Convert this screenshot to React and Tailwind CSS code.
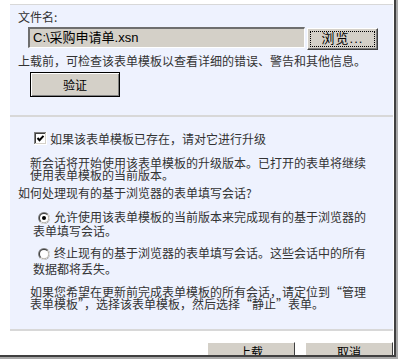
const font = "font-['Noto_Sans_CJK_SC','Liberation_Sans',sans-serif]";

function CheckBox() {
  return (
    <svg width="13" height="13" viewBox="0 0 13 13" className="shrink-0">
      <rect x="0" y="0" width="13" height="13" fill="#ffffff" />
      <rect x="0" y="0" width="12" height="1" fill="#808080" />
      <rect x="0" y="0" width="1" height="12" fill="#808080" />
      <rect x="1" y="1" width="10" height="1" fill="#404040" />
      <rect x="1" y="1" width="1" height="10" fill="#404040" />
      <rect x="1" y="11" width="11" height="1" fill="#d4d0c8" />
      <rect x="11" y="1" width="1" height="11" fill="#d4d0c8" />
      <path d="M3.5 6 L5.5 8.2 L9.5 3.8" fill="none" stroke="#000" strokeWidth="2" />
    </svg>
  );
}

function Radio({ on }) {
  return (
    <svg width="12" height="12" viewBox="0 0 12 12" className="shrink-0">
      <circle cx="6" cy="6" r="6" fill="#808080" />
      <path d="M10.24 1.76 A6 6 0 0 1 1.76 10.24 Z" fill="#ffffff" />
      <circle cx="6" cy="6" r="5" fill="#404040" />
      <path d="M9.54 2.46 A5 5 0 0 1 2.46 9.54 Z" fill="#d4d0c8" />
      <circle cx="6" cy="6" r="4" fill="#ffffff" />
      {on && <circle cx="6" cy="6" r="2" fill="#000000" />}
    </svg>
  );
}

export default function App() {
  return (
    <div className={`w-[401px] h-[359px] bg-white overflow-hidden text-[12px] leading-[12px] text-[#333333] ${font}`}>
      <div className="w-[398px] h-[359px] border-r-2 border-b-2 border-[#a8a8a8]">
        <div className="h-full border-r-2 border-b-2 border-[#404040] overflow-hidden flex flex-col">
          <div className="pl-[10px] pt-[4px] pr-[1px]">
            {/* upload section */}
            <div className="h-[111px] border-t border-[#d8d8d8] bg-[#eef2fe] px-[8px] pt-[6px]">
              <div className="whitespace-nowrap">文件名:</div>
              <div className="flex items-start mt-[4px] ml-[10px]">
                <div className="w-[277px] h-[21px] bg-[#d4d0c8] border-t-2 border-l-2 border-t-[#6e6e6e] border-l-[#6e6e6e] border-b border-r border-b-white border-r-white flex items-center pl-[3px] text-[13px] text-black font-['Liberation_Sans','Noto_Sans_CJK_SC',sans-serif] whitespace-nowrap">
                  C:\采购申请单.xsn
                </div>
                <button className="ml-[2px] mt-[1px] w-[71px] h-[22px] bg-[#d4d0c8] border border-t-white border-l-white border-r-[#404040] border-b-[#404040] shadow-[inset_-1px_-1px_0_#808080] p-[2px] flex">
                  <span className="flex-1 border border-dotted border-black flex items-center justify-center text-black text-[13px] font-['Liberation_Sans','Noto_Sans_CJK_SC',sans-serif] tracking-[1px]">
                    浏览...
                  </span>
                </button>
              </div>
              <div className="mt-[5px] whitespace-nowrap">
                上载前，可检查该表单模板以查看详细的错误、警告和其他信息。
              </div>
              <button className="mt-[5px] ml-[12px] w-[90px] h-[25px] bg-[#d4d0c8] border border-black shadow-[inset_1px_1px_0_#ffffff,inset_-1px_-1px_0_#808080] flex items-center justify-center text-black">
                验证
              </button>
            </div>
            <div className="h-[2px] bg-[#d8d8d8]" />

            {/* upgrade section */}
            <div className="h-[212px] bg-[#eef2fe] pl-[8px] pt-[15px]">
              <div className="flex items-start ml-[16px] whitespace-nowrap">
                <CheckBox />
                <span className="ml-[3px] mt-[1px]">如果该表单模板已存在，请对它进行升级</span>
              </div>
              <div className="mt-[12px] ml-[12px] whitespace-nowrap">
                新会话将开始使用该表单模板的升级版本。已打开的表单将继续
                <br />
                使用表单模板的当前版本。
              </div>
              <div className="mt-[6px] whitespace-nowrap">如何处理现有的基于浏览器的表单填写会话?</div>

              <div className="mt-[12px] ml-[15px] whitespace-nowrap">
                <div className="flex items-start">
                  <span className="mt-[1px] ml-[5px]">
                    <Radio on />
                  </span>
                  <span className="ml-[4px]">允许使用该表单模板的当前版本来完成现有的基于浏览器的</span>
                </div>
                <div className="mt-[1px]">表单填写会话。</div>
              </div>

              <div className="mt-[10px] ml-[15px] whitespace-nowrap">
                <div className="flex items-start">
                  <span className="mt-[1px] ml-[5px]">
                    <Radio />
                  </span>
                  <span className="ml-[4px]">终止现有的基于浏览器的表单填写会话。这些会话中的所有</span>
                </div>
                <div className="mt-[3px]">数据都将丢失。</div>
              </div>

              <div className="mt-[11px] ml-[12px] whitespace-nowrap">
                如果您希望在更新前完成表单模板的所有会话，请定位到“管理
                <br />
                表单模板”，选择该表单模板，然后选择“静止”表单。
              </div>
            </div>
            <div className="h-[2px] bg-[#d8d8d8]" />
          </div>

          {/* footer buttons */}
          <div className="flex justify-end gap-[10px] pr-[1px] mt-[11px]">
            <button className="w-[88px] h-[24px] bg-[#d4d0c8] border border-t-white border-l-white border-r-[#404040] border-b-[#404040] flex justify-center pt-[3px] text-black">
              上载
            </button>
            <button className="w-[88px] h-[24px] bg-[#d4d0c8] border border-t-white border-l-white border-r-[#404040] border-b-[#404040] flex justify-center pt-[3px] text-black">
              取消
            </button>
          </div>
        </div>
      </div>
    </div>
  );
}
